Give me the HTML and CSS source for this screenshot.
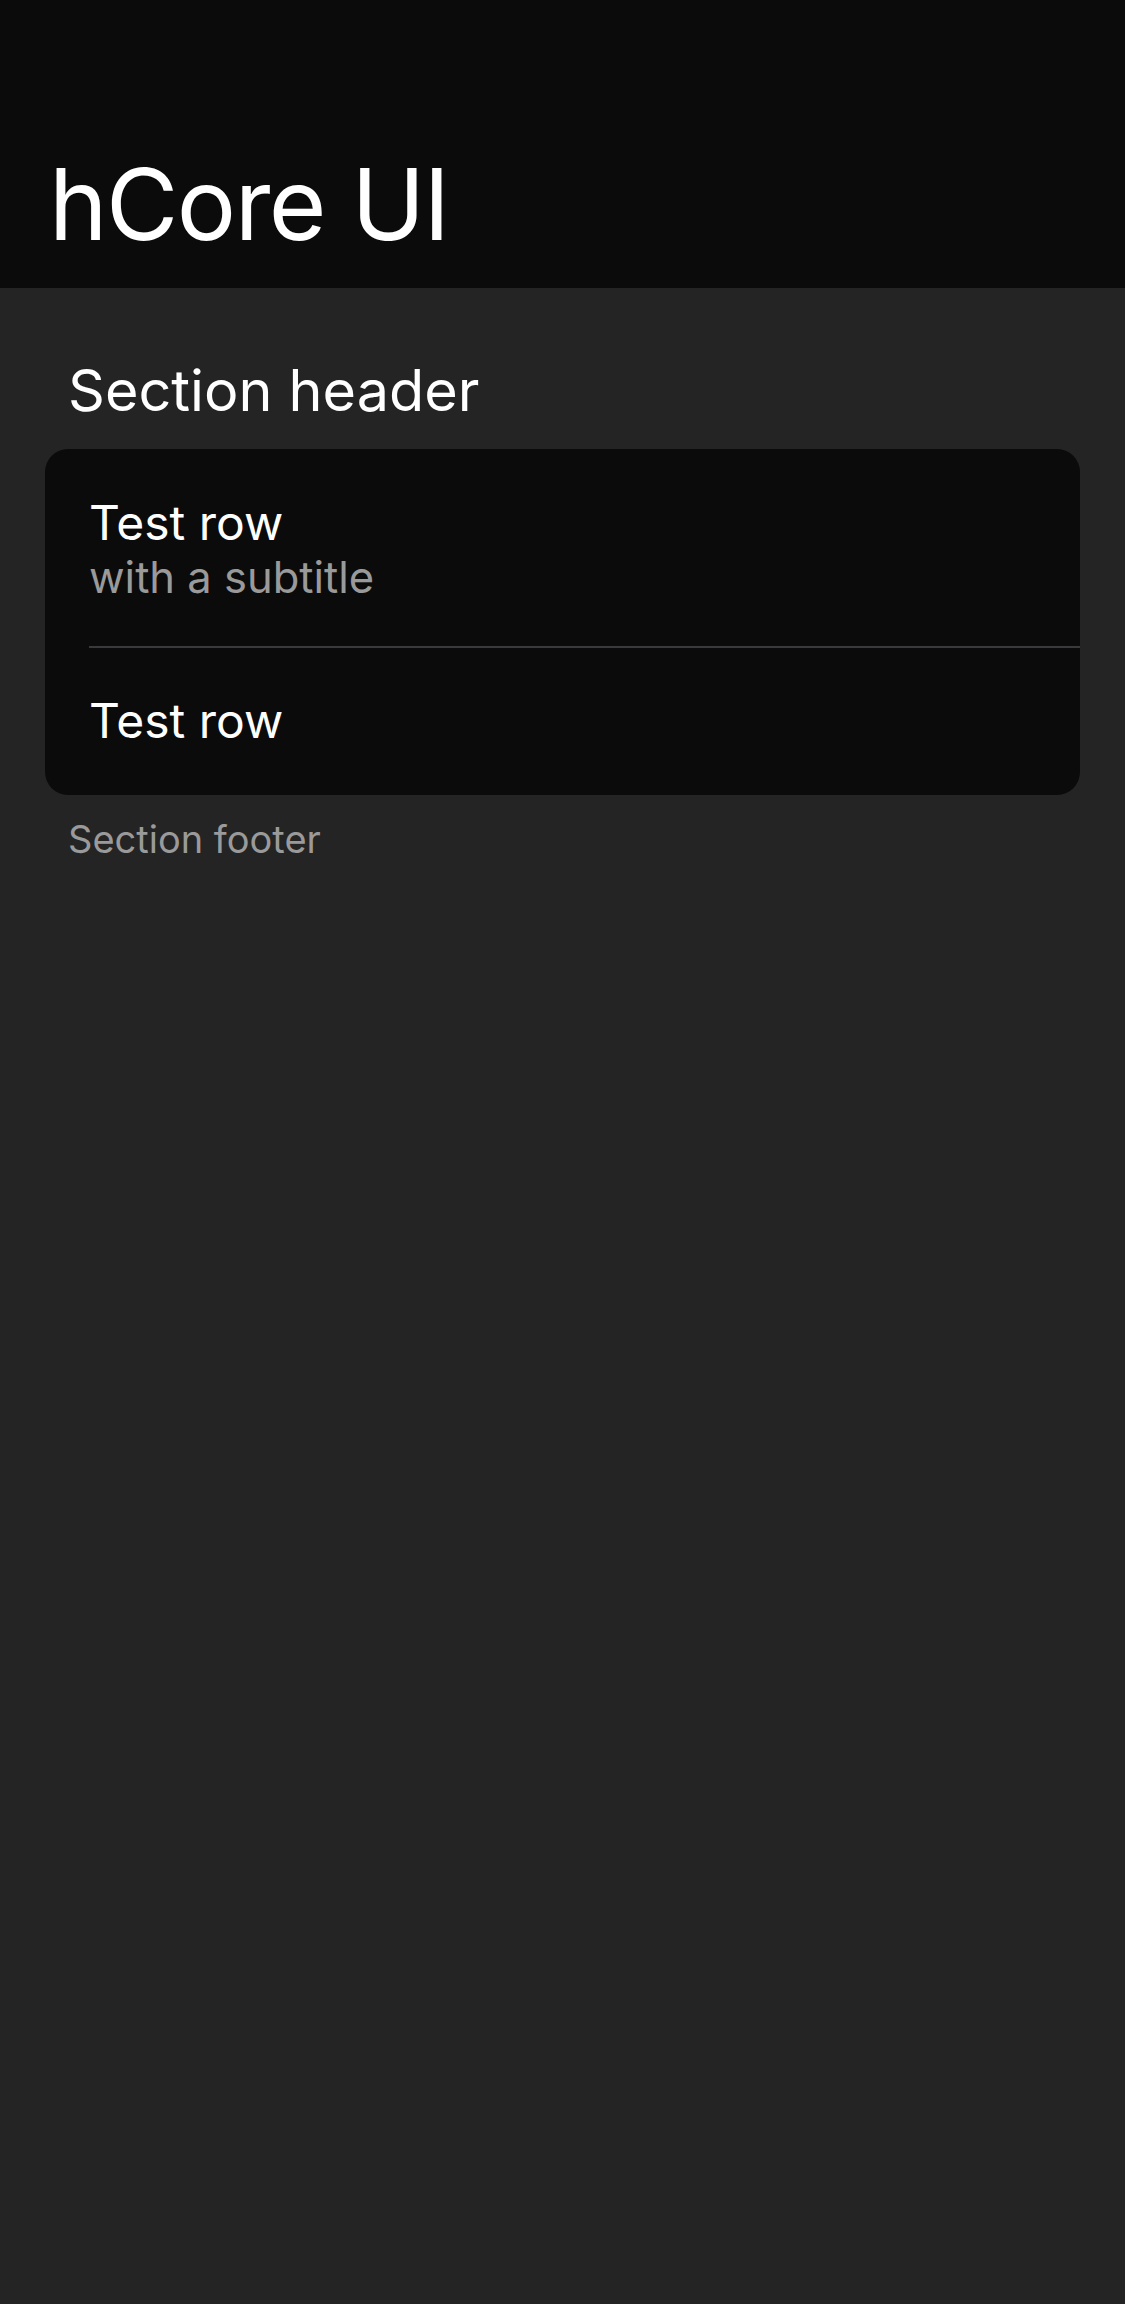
FILE: index.html
```html
<!DOCTYPE html>
<html lang="en">
<head>
<meta charset="utf-8">
<title>hCore UI</title>
<link rel="stylesheet" href="styles.css">
</head>
<body>
<header class="app-bar">
  <h1 class="app-title">hCore UI</h1>
</header>
<main class="content">
  <section class="section">
    <h2 class="section-header">Section header</h2>
    <div class="card">
      <div class="row">
        <div class="row-title">Test row</div>
        <div class="row-subtitle">with a subtitle</div>
      </div>
      <div class="row">
        <div class="row-title">Test row</div>
      </div>
    </div>
    <p class="section-footer">Section footer</p>
  </section>
</main>
</body>
</html>
```

FILE: styles.css
```css
html, body {
  margin: 0;
  padding: 0;
}
body {
  background: #242424;
  color: #ffffff;
  font-family: Inter, "Noto Sans", "Liberation Sans", sans-serif;
  min-height: 2304px;
}
.app-bar {
  background: #0b0b0b;
  height: 288px;
  box-sizing: border-box;
  display: flex;
  align-items: flex-end;
  padding: 0 0 34px 49px;
}
.app-title {
  margin: 0;
  font-size: 99px;
  line-height: 99px;
  font-weight: 400;
  letter-spacing: -1.5px;
}
.content {
  padding: 74px 45px 0 45px;
}
.section-header {
  margin: 0 0 30px 23px;
  font-size: 57.5px;
  line-height: 57px;
  font-weight: 400;
}
.card {
  background: #0b0b0b;
  border-radius: 23px;
  overflow: hidden;
}
.row {
  margin-left: 44px;
  padding: 50px 0;
  display: flex;
  flex-direction: column;
  gap: 9px;
}
.row:first-child {
  padding-bottom: 47px;
}
.row + .row {
  border-top: 2px solid #3a3a3c;
  padding-top: 49px;
}
.row-title {
  font-size: 48px;
  line-height: 48px;
}
.row-subtitle {
  font-size: 43.5px;
  line-height: 43px;
  color: #9a9a9a;
}
.section-footer {
  margin: 25px 0 0 23px;
  font-size: 38px;
  line-height: 38px;
  color: #9a9a9a;
}
```
